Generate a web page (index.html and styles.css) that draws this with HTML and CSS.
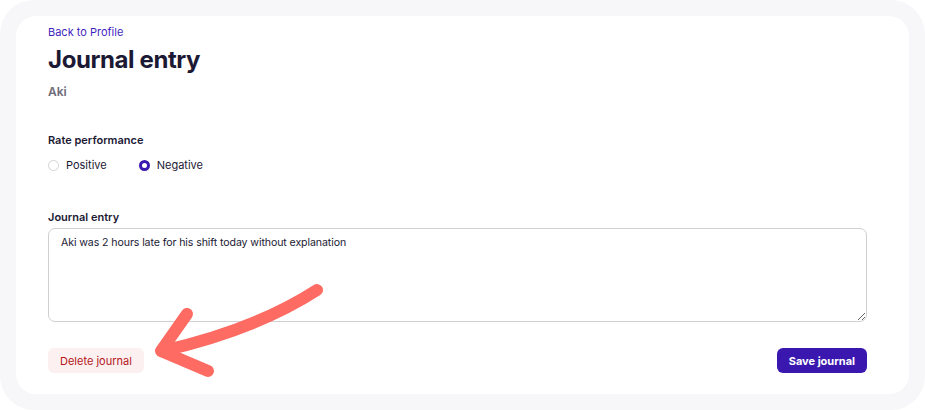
FILE: index.html
```html
<html>
<head>
  <title>Journal entry</title>
  <link rel="stylesheet" href="styles.css">
</head>
<body>
  <div class="frame">
    <div class="card">
      <a class="back" href="#">Back to Profile</a>
      <h1>Journal entry</h1>
      <p class="name">Aki</p>

      <div class="field">
        <div class="label">Rate performance</div>
        <div class="radios">
          <label class="radio"><span class="dot"></span>Positive</label>
          <label class="radio"><span class="dot checked"></span>Negative</label>
        </div>
      </div>

      <div class="field entry">
        <div class="label">Journal entry</div>
        <textarea>Aki was 2 hours late for his shift today without explanation</textarea>
      </div>

      <div class="actions">
        <button class="btn delete">Delete journal</button>
        <button class="btn save">Save journal</button>
      </div>

      <svg class="arrow" width="925" height="410" viewBox="0 0 925 410">
        <path d="M317 290 Q255 330 162 351" />
        <path d="M187 314 L161 351 L208 371" />
      </svg>
    </div>
  </div>
</body>
</html>
```

FILE: styles.css
```css
body {
  margin: 0;
  background: #ffffff;
  font-family: Inter, "Noto Sans", sans-serif;
  color: #1b1934;
}

.frame {
  background: #f7f7f9;
  border-radius: 34px;
  padding: 16px;
  height: 410px;
  box-sizing: border-box;
}

.card {
  position: relative;
  background: #ffffff;
  border-radius: 20px;
  height: 100%;
  box-sizing: border-box;
  padding: 9px 42px 0 32px;
}

.back {
  display: block;
  font-size: 11px;
  color: #3f1fc0;
  text-decoration: none;
  line-height: 14px;
}

h1 {
  font-size: 24px;
  font-weight: 700;
  margin: 6px 0 0;
  line-height: 30px;
  letter-spacing: -0.4px;
}

.name {
  margin: 9px 0 0;
  font-size: 12px;
  font-weight: 600;
  color: #6d6c78;
}

.field {
  margin-top: 34px;
}

.label {
  font-size: 11px;
  font-weight: 600;
  line-height: 14px;
}

.radios {
  display: flex;
  gap: 32px;
  margin-top: 11px;
  font-size: 11px;
}

.radio {
  display: flex;
  align-items: center;
  gap: 7px;
}

.dot {
  width: 11px;
  height: 11px;
  border: 1px solid #d3d3d8;
  border-radius: 50%;
  box-sizing: border-box;
}

.dot.checked {
  border: 3.5px solid #3a18b0;
  background: #ffffff;
}

.entry {
  margin-top: 38px;
}

textarea {
  display: block;
  width: 100%;
  height: 94px;
  margin-top: 4px;
  box-sizing: border-box;
  border: 1px solid #cfcfd4;
  border-radius: 7px;
  padding: 7px 12px;
  font-family: Inter, "Noto Sans", sans-serif;
  font-size: 10.6px;
  letter-spacing: -0.1px;
  color: #1b1934;
}

.actions {
  display: flex;
  justify-content: space-between;
  margin-top: 26px;
}

.btn {
  font-family: Inter, "Noto Sans", sans-serif;
  font-size: 11px;
  border: none;
  border-radius: 6px;
  height: 25px;
  padding: 0 12px;
}

.delete {
  background: #fcf0f0;
  color: #b4161b;
}

.save {
  background: #3a18b0;
  color: #ffffff;
  font-weight: 700;
}

.arrow {
  position: absolute;
  left: -16px;
  top: -16px;
  pointer-events: none;
}

.arrow path {
  fill: none;
  stroke: #fd6b62;
  stroke-width: 12;
  stroke-linecap: round;
  stroke-linejoin: round;
}
```
